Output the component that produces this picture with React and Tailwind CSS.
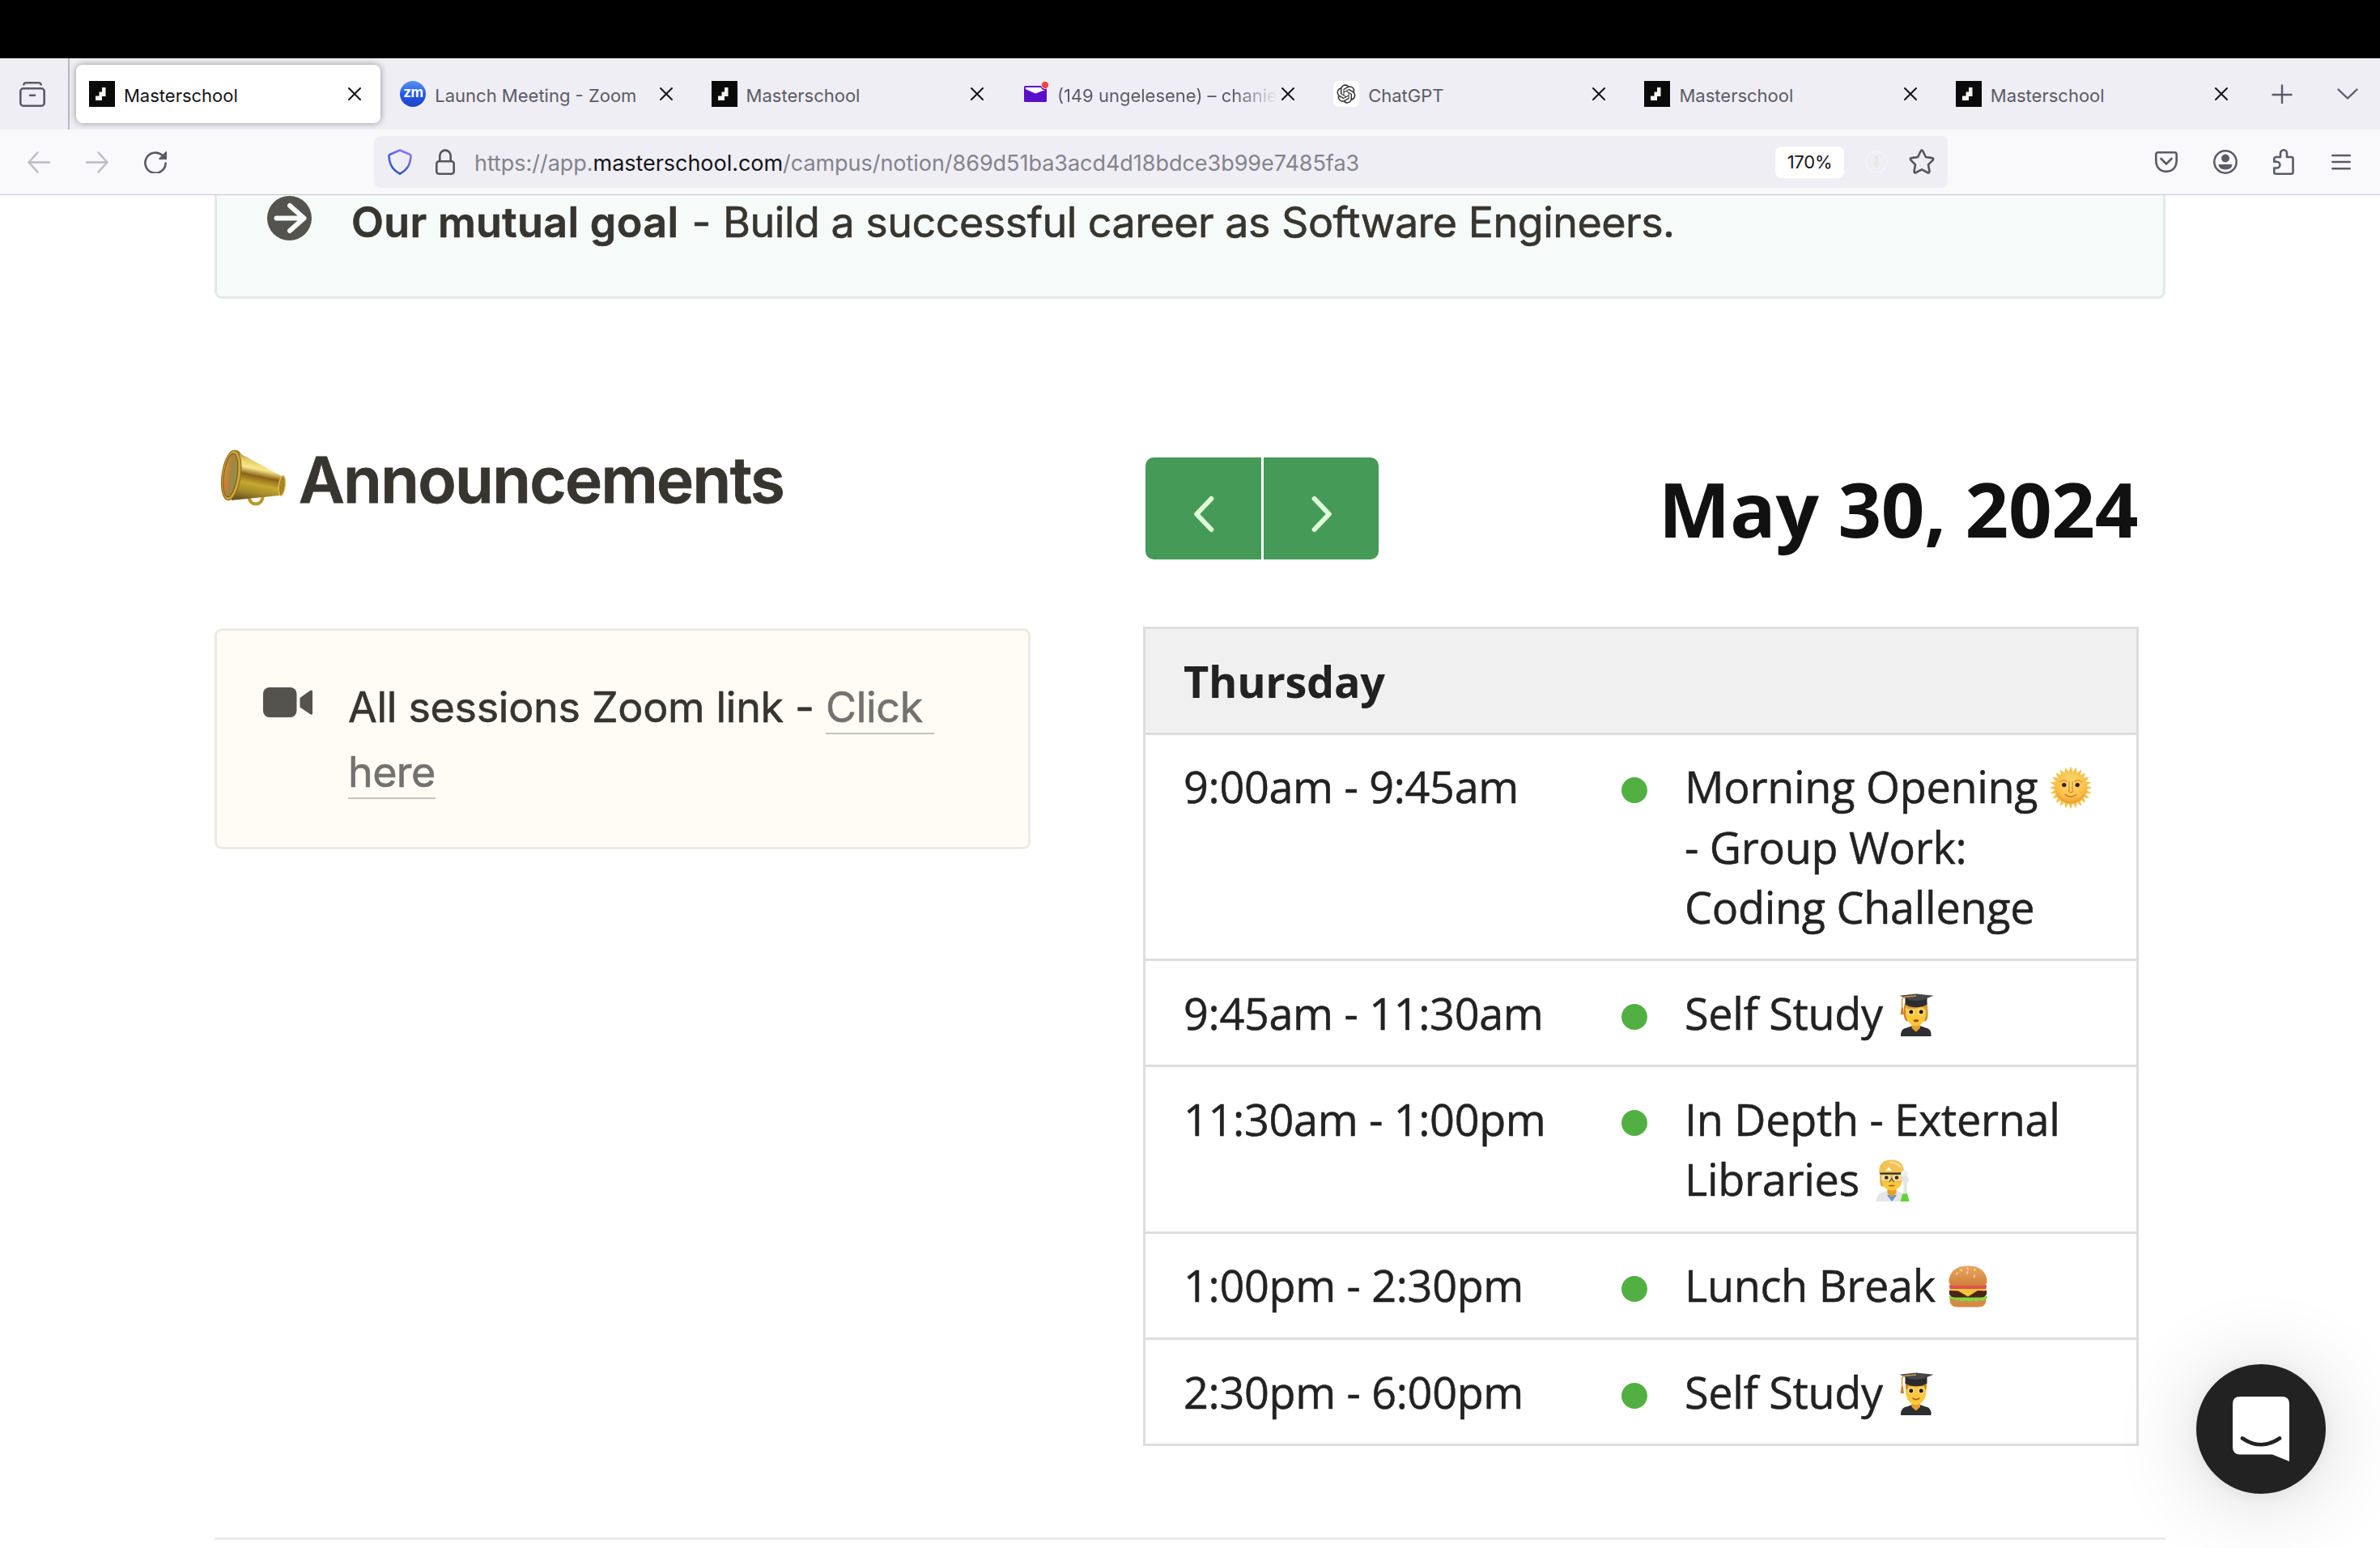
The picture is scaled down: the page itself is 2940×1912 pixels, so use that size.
import React from "react";
import { RiOpenaiFill } from "react-icons/ri";

const STEPS = "M8 24V18.5H12.5V13.5H16V8H20.5V19H16V24Z";

function MasterschoolIcon() {
  return (
    <svg className="size-8 shrink-0" viewBox="0 0 32 32">
      <rect width="32" height="32" fill="#0a0a0a" />
      <path d={STEPS} fill="#f4f3ee" />
    </svg>
  );
}

function ZoomIcon() {
  return (
    <div className="flex size-8 shrink-0 items-center justify-center rounded-full bg-linear-to-t from-[#1e45c0] via-[#2559ee] to-[#5a92ec]">
      <span className="-mt-1 font-['Inter'] text-[17px] leading-none font-bold tracking-[-0.5px] text-white">zm</span>
    </div>
  );
}

function MailIcon() {
  return (
    <svg className="size-8 shrink-0" viewBox="0 0 32 32">
      <rect x="2" y="6" width="28" height="20" rx="1.5" fill="#5a0ecb" />
      <path d="M3.8 8H22.5L25 11H28.2L16 15.6L3.8 10Z" fill="#fff" />
      <circle cx="28" cy="5" r="5" fill="#efeef4" />
      <circle cx="28" cy="5" r="4.2" fill="#ee4444" />
    </svg>
  );
}

function ChatGptIcon() {
  return (
    <div className="flex size-8 shrink-0 items-center justify-center rounded-[7px] bg-white">
      <RiOpenaiFill className="size-[28px] text-[#333]" />
    </div>
  );
}

function CloseIcon() {
  return (
    <svg className="size-4 shrink-0" viewBox="0 0 16 16" fill="none" stroke="#15141a" strokeWidth="2" strokeLinecap="round">
      <path d="M1 1L15 15M15 1L1 15" />
    </svg>
  );
}

const TABS = [
  { title: "Masterschool", Icon: MasterschoolIcon, active: true },
  { title: "Launch Meeting - Zoom", Icon: ZoomIcon },
  { title: "Masterschool", Icon: MasterschoolIcon },
  { title: "(149 ungelesene) – chanie", Icon: MailIcon, fade: true },
  { title: "ChatGPT", Icon: ChatGptIcon },
  { title: "Masterschool", Icon: MasterschoolIcon },
  { title: "Masterschool", Icon: MasterschoolIcon },
];

function Tab({ title, Icon, active, fade }) {
  return (
    <div
      className={
        "flex h-[72px] w-[376.3px] shrink-0 items-center rounded-lg pl-4 pr-6 " +
        (active ? "bg-white text-[#15141a] shadow-[0_0_8px_rgba(0,0,0,0.4)]" : "text-[#5b5b66]")
      }
    >
      <Icon />
      <span
        className={
          "mr-[4px] ml-[11px] min-w-0 flex-1 pt-[3px] text-[22px] leading-8 whitespace-nowrap " +
          (fade ? "mask-r-from-80% mask-r-to-100%" : "")
        }
      >
        {title}
      </span>
      <CloseIcon />
    </div>
  );
}

function TabStrip() {
  return (
    <div className="flex h-[88px] items-center bg-[#efeef4]">
      <div className="flex h-full w-[86px] items-center border-r-2 border-[#b8b8bf] pl-6">
        <svg className="size-8" viewBox="0 0 32 32" fill="none" stroke="#5b5b66" strokeWidth="2.6" strokeLinecap="round">
          <path d="M5.3 4.3Q6 2.2 8.5 2.2H23.5Q26 2.2 26.7 4.3" />
          <rect x="1.3" y="9.3" width="29.4" height="21.4" rx="3.5" />
          <path d="M13 17.7H19" />
        </svg>
      </div>
      <div className="ml-2 flex gap-2">
        {TABS.map((t, i) => (
          <Tab key={i} {...t} />
        ))}
      </div>
      <svg className="ml-[30px] h-6 w-[26px]" viewBox="0 0 26 24" fill="none" stroke="#5b5b66" strokeWidth="2.4" strokeLinecap="round">
        <path d="M1.5 13H24.5M13 1.5V24" />
      </svg>
      <svg className="ml-[55px] h-[14px] w-[26px]" viewBox="0 0 26 14" fill="none" stroke="#5b5b66" strokeWidth="2.4" strokeLinecap="round" strokeLinejoin="round">
        <path d="M1.5 1.5L13 12.5L24.5 1.5" />
      </svg>
    </div>
  );
}

function AddressBar() {
  return (
    <div className="flex h-16 w-[1944px] items-center rounded-lg bg-[#efeef4] pl-[17px] text-[27px]">
      <svg className="h-8 w-[30px]" viewBox="0 0 30 32" fill="none">
        <defs>
          <linearGradient id="shield" x1="0.2" y1="1" x2="0.8" y2="0">
            <stop offset="0" stopColor="#2b50c4" />
            <stop offset="0.5" stopColor="#4d62d8" />
            <stop offset="1" stopColor="#9673f5" />
          </linearGradient>
        </defs>
        <path
          d="M15 1.5L27.2 6.8Q28.6 7.4 28.5 9C27.8 19 24.5 25.5 15 30.6C5.5 25.5 2.2 19 1.5 9Q1.4 7.4 2.8 6.8Z"
          stroke="url(#shield)"
          strokeWidth="2.6"
          strokeLinejoin="round"
        />
      </svg>
      <svg className="ml-[29px] h-8 w-6" viewBox="0 0 24 32" fill="none" stroke="#56555c" strokeWidth="2.6">
        <path d="M5.3 15V8.3a6.7 6.7 0 0 1 13.4 0V15" />
        <rect x="1.3" y="15.3" width="21.4" height="15.4" rx="3" />
      </svg>
      <div className="ml-[24px] pt-[3px] leading-9 tracking-[-0.04px] whitespace-nowrap text-[#84838c]">
        https://app.<span className="text-[#15141a]">masterschool.com</span>/campus/notion/869d51ba3acd4d18bdce3b99e7485fa3
      </div>
      <div className="mr-[16px] ml-auto flex items-center">
        <div className="flex h-[39px] w-[85px] items-center justify-center rounded-lg bg-white pt-px text-[22px] tracking-[-0.2px] text-[#15141a]">170%</div>
        <svg className="ml-[26px] size-7" viewBox="0 0 28 28">
          <circle cx="14" cy="14" r="13" fill="none" stroke="#f6f6f8" strokeWidth="1.2" />
          <path d="M11 5H17V14H20.5L14 23.5L7.5 14H11Z" fill="#e7e8e9" stroke="#f4f4f4" />
        </svg>
        <svg className="ml-[26px] size-8" viewBox="0 0 32 32" fill="none" stroke="#56555c" strokeWidth="2.6" strokeLinejoin="round">
          <path d="M14.6 2.8Q16 0.2 17.4 2.8L20.9 10L28.6 11.1Q31.4 11.6 29.5 13.8L24 19.4L25.4 27.2Q25.7 30.3 23 29L16 25.3L9 29Q6.3 30.3 6.6 27.2L8 19.4L2.5 13.8Q0.6 11.6 3.4 11.1L11.1 10Z" />
        </svg>
      </div>
    </div>
  );
}

function NavBar() {
  return (
    <div className="flex h-[81px] items-center border-b border-[#c6c6cb] bg-[#f9f9fb]">
      <div className="flex w-[462px] items-center gap-11 pl-[34px]">
        <svg className="size-7" viewBox="0 0 28 28" fill="none" stroke="#bcbbc1" strokeWidth="2.4" strokeLinecap="round" strokeLinejoin="round">
          <path d="M27 14.5H1.5M12.5 2.5L1.5 14.5L12.5 26.5" />
        </svg>
        <svg className="size-7" viewBox="0 0 28 28" fill="none" stroke="#bcbbc1" strokeWidth="2.4" strokeLinecap="round" strokeLinejoin="round">
          <path d="M1 14.5H26.5M15.5 2.5L26.5 14.5L15.5 26.5" />
        </svg>
        <svg className="size-7" viewBox="0 0 28 28" fill="none">
          <path d="M22.5 5.9A12.6 12.6 0 1 0 26.6 15.5" stroke="#5b5b66" strokeWidth="2.6" strokeLinecap="round" />
          <path d="M28 1.5V11H18.5Q17.8 10.4 18.5 9.6L26.6 1.2Q27.6 0.6 28 1.5Z" fill="#5b5b66" />
        </svg>
      </div>
      <AddressBar />
      <div className="ml-[256px] flex items-center gap-11">
        <svg className="h-7 w-7" viewBox="0 0 28 28" fill="none" stroke="#5b5b66" strokeWidth="2.6" strokeLinecap="round" strokeLinejoin="round">
          <path d="M3.8 2.3H24.2Q26.7 2.3 26.7 4.8V12.5Q26 25.3 14 25.9Q2 25.3 1.3 12.5V4.8Q1.3 2.3 3.8 2.3Z" />
          <path d="M7.5 10L14 16.5L20.5 10" />
        </svg>
        <svg className="size-[30px]" viewBox="0 0 30 30">
          <circle cx="15" cy="15" r="13.7" fill="none" stroke="#5b5b66" strokeWidth="2.5" />
          <circle cx="15" cy="10.5" r="5" fill="#5b5b66" />
          <path d="M6.5 18H23.5Q23 24.5 15 24.5Q7 24.5 6.5 18Z" fill="#5b5b66" />
        </svg>
        <svg className="h-8 w-[26px]" viewBox="0 0 26 32" fill="none" stroke="#5b5b66" strokeWidth="2.6" strokeLinejoin="round">
          <path d="M9 10V5.3a4 4 0 0 1 8 0V10H22.5a2 2 0 0 1 2 2V28.7a2 2 0 0 1-2 2H3.3a2 2 0 0 1-2-2V23.5H4.5a3.9 3.9 0 0 0 0-7.8H1.3V12a2 2 0 0 1 2-2Z" />
        </svg>
        <svg className="ml-0.5 h-5 w-6" viewBox="0 0 24 20" stroke="#5b5b66" strokeWidth="2.5" strokeLinecap="round">
          <path d="M1.3 2H22.7M1.3 10H22.7M1.3 18.3H22.7" />
        </svg>
      </div>
    </div>
  );
}

function Megaphone() {
  return (
    <svg className="mb-2 h-[72px] w-[84px]" viewBox="0 0 84 72">
      <defs>
        <linearGradient id="cone" x1="0.6" y1="0" x2="0.4" y2="1">
          <stop offset="0.05" stopColor="#7a5a1c" />
          <stop offset="0.25" stopColor="#e9cf66" />
          <stop offset="0.38" stopColor="#f8e88c" />
          <stop offset="0.52" stopColor="#8a6318" />
          <stop offset="0.68" stopColor="#c6a92f" />
          <stop offset="0.85" stopColor="#a3892a" />
          <stop offset="1" stopColor="#6f5a20" />
        </linearGradient>
        <linearGradient id="bell" x1="0" y1="0" x2="1" y2="0">
          <stop offset="0" stopColor="#d98b3c" />
          <stop offset="0.45" stopColor="#a8843e" />
          <stop offset="1" stopColor="#8f9050" />
        </linearGradient>
      </defs>
      <ellipse cx="46" cy="61" rx="8.5" ry="8.5" fill="none" stroke="#b89a2e" strokeWidth="4" />
      <path d="M22 2.5Q26 4 28 8L78 35L75 59L16 65Z" fill="url(#cone)" />
      <ellipse cx="78.3" cy="47" rx="4" ry="12.4" transform="rotate(7 78.3 47)" fill="#a8842a" stroke="#e0c356" strokeWidth="1.3" />
      <ellipse cx="15.7" cy="34" rx="11.5" ry="31" transform="rotate(8 15.7 34)" fill="#cfa636" stroke="#8d6c1e" strokeWidth="1.2" />
      <ellipse cx="14.8" cy="34" rx="8.2" ry="27" transform="rotate(8 14.8 34)" fill="url(#bell)" stroke="#7a5420" strokeWidth="1" />
      <path d="M9 40Q8 52 11 58Q7 52 7.5 42Z" fill="#e86a28" />
    </svg>
  );
}

const RAYS = Array.from({ length: 24 }, (_, i) => i * 15);

function Sun() {
  return (
    <svg className="-mt-2 ml-px inline-block h-[52px] w-[52px] align-[-7px]" viewBox="0 0 52 52">
      <defs>
        <radialGradient id="sun" cx="0.5" cy="0.35" r="0.65">
          <stop offset="0" stopColor="#ffdb73" />
          <stop offset="0.7" stopColor="#fbc04a" />
          <stop offset="1" stopColor="#e79b2c" />
        </radialGradient>
      </defs>
      {RAYS.map((a) => (
        <path key={a} d="M23.2 8L26 0.5L28.8 8Z" fill="#f6c63c" stroke="#eaa92c" strokeWidth="0.4" transform={`rotate(${a} 26 26)`} />
      ))}
      <circle cx="26" cy="26" r="19.5" fill="url(#sun)" />
      <ellipse cx="17.8" cy="22.5" rx="3.4" ry="2.8" fill="#e9a53b" />
      <ellipse cx="34.2" cy="22.5" rx="3.4" ry="2.8" fill="#e9a53b" />
      <circle cx="17.8" cy="22.5" r="2.5" fill="#2d2118" />
      <circle cx="34.2" cy="22.5" r="2.5" fill="#2d2118" />
      <path d="M12.5 19Q17 14.5 21.5 18.5M39.5 19Q35 14.5 30.5 18.5M24 18V28.5Q22.5 31.5 26 31.8Q29.5 31.5 28 28.5V18" fill="none" stroke="#d98a2a" strokeWidth="1.2" />
      <path d="M19.5 34.5Q26 40 32.5 34.5" fill="none" stroke="#c96a2a" strokeWidth="1.5" strokeLinecap="round" />
    </svg>
  );
}

function Graduate({ longHair }) {
  return (
    <svg className="-mt-2 mx-[6px] inline-block h-[53px] w-[43px] align-[-8px]" viewBox="0 0 43 52" preserveAspectRatio="none">
      <path d="M2 52Q1.5 42.5 10 41.5L15.5 39.5H26.5L32 41.5Q40.5 42.5 39.5 52Z" fill="#2e2f33" />
      <path d="M15.5 34H26V42L20.8 46.5L15.5 42Z" fill="#e3a02c" />
      {longHair && <path d="M6.5 13Q4 30 9 33.5H33Q37 30 34.5 13Z" fill="#c98526" />}
      <path d="M8 14H33.5Q34.5 28 31 33Q26 39.5 20.8 39.5Q15.5 39.5 10.5 33Q7 28 8 14Z" fill="#fbc83d" />
      {longHair ? (
        <path d="M7 13Q9 20 15 18.5Q22 19 27 16Q31 18 34.5 22V12H7Z" fill="#dd9a30" />
      ) : (
        <path d="M7.5 12Q8 20 9.5 22L11 17H31L32.5 22Q34.5 18 34 12Z" fill="#c98526" />
      )}
      <circle cx="14.8" cy="22.3" r="3.4" fill="#fff2c9" />
      <circle cx="27.2" cy="22.3" r="3.4" fill="#fff2c9" />
      <circle cx="14.8" cy="22.3" r="2.5" fill="#2a1c14" />
      <circle cx="27.2" cy="22.3" r="2.5" fill="#2a1c14" />
      {longHair ? (
        <ellipse cx="21" cy="33" rx="3.2" ry="1.6" fill="#9a4f21" />
      ) : (
        <path d="M17 31.5Q21 34.5 25 31.5" fill="none" stroke="#a85b1f" strokeWidth="1.5" strokeLinecap="round" />
      )}
      <path d="M7.5 5H34.5V13.5Q28 17 21 17Q14 17 7.5 13.5Z" fill="#2b2c2f" />
      <path d="M0.5 2.8L21 0.5L42.5 2.8L29 8Q21 9.5 13 8Z" fill="#46474b" />
      <path d="M21 3L6 4.5Q3.8 5 3.6 8V18" fill="none" stroke="#d99a3a" strokeWidth="1.5" />
      <path d="M2.8 17H4.8L6 25.5H1.6Z" fill="#c98330" />
    </svg>
  );
}

function Scientist() {
  return (
    <svg className="-mt-2 mx-[6px] inline-block h-[52px] w-[42px] align-[-7px]" viewBox="0 0 42 52">
      <path d="M0.5 52Q1 42 9 40.5L15 38.5H25L32 41Q36 43 36 52Z" fill="#e4e6ea" />
      <path d="M14 44L20 52L26 44Z" fill="#5e93dd" />
      <path d="M14.5 34H25.5V42L20 47L14.5 42Z" fill="#e3a02c" />
      <path d="M5.5 15Q4.5 28 6.5 33L11 34L29 33Q35 26 34 15Z" fill="#e5a63a" />
      <path d="M6 14H33.5Q34 28 30 33.5Q25 38.5 20 38.5Q15 38.5 10 33.5Q6 28 6 14Z" fill="#fbc83d" />
      <path d="M4.5 18Q2.5 1 19 0.5Q36 0.5 35 19L32.5 17Q22 18 16 9.5Q13 16 4.5 18Z" fill="#f2c257" />
      <path d="M17 4Q26 3 31 10" fill="none" stroke="#fbe09a" strokeWidth="2" />
      <rect x="6.5" y="18.5" width="12" height="8.5" rx="3" fill="#f7dc95" stroke="#b3a27a" strokeWidth="0.6" />
      <rect x="20.5" y="18.5" width="12" height="8.5" rx="3" fill="#f7dc95" stroke="#b3a27a" strokeWidth="0.6" />
      <path d="M5.5 17.5H33" stroke="#2d2a26" strokeWidth="2.2" />
      <circle cx="13.3" cy="22.5" r="2.3" fill="#3a2a1c" />
      <circle cx="26" cy="22.5" r="2.3" fill="#3a2a1c" />
      <path d="M17 28L19.8 23.5L22.5 28" fill="none" stroke="#5d4a2a" strokeWidth="1.3" />
      <path d="M17 32.5H22.5" stroke="#a8501f" strokeWidth="1.6" strokeLinecap="round" />
      <path d="M34.5 27H38.5V40L41.5 52H30.5L34.5 40Z" fill="#dce8dd" />
      <path d="M33.3 42.5H39L41.5 52H30.5Z" fill="#61d335" />
      <circle cx="35.5" cy="18" r="4.5" fill="#eceeef" />
      <circle cx="36.5" cy="25" r="4.5" fill="#e3e6e8" />
    </svg>
  );
}

function Burger() {
  return (
    <svg className="-mt-2 ml-px inline-block h-[52px] w-[50px] align-[-7px]" viewBox="0 0 50 52">
      <defs>
        <linearGradient id="bun" x1="0" y1="0" x2="0" y2="1">
          <stop offset="0" stopColor="#e9a862" />
          <stop offset="1" stopColor="#cf7f38" />
        </linearGradient>
      </defs>
      <path d="M2.5 40H47.5Q48 51.5 38 51.5H12Q2 51.5 2.5 40Z" fill="#d58b48" />
      <path d="M1.5 38Q25 35 48.5 38Q50 41 46 41.5Q43 45 38.5 42.5Q35 45.5 31 43Q27 46 23 43Q18 46 15 42.5Q10 44.5 8 41.5Q1 42 1.5 38Z" fill="#83d943" />
      <path d="M2 31Q25 27 48 31Q49.5 39.5 41 39.5H9Q0.5 39.5 2 31Z" fill="#4b2417" />
      <path d="M2 28H48.5L46 31.5L37 31L25 38.5L13 31.5L3 31Z" fill="#f8c43e" />
      <path d="M2.5 24H47.5Q49 28.5 46 29H4Q1 28.5 2.5 24Z" fill="#e2514b" />
      <path d="M1.5 18Q4 0.5 25 0.5Q46 0.5 48.5 18Q49 25 43 25H7Q1 25 1.5 18Z" fill="url(#bun)" />
      <path d="M16 5L17.5 7M24 3L25 5M12 9L11 11M24.5 8L24 10M33 12L32.5 14.5M34 4.5L33 6" stroke="#f6dcae" strokeWidth="1.5" strokeLinecap="round" />
    </svg>
  );
}

const EVENTS = [
  { time: "9:00am - 9:45am", box: "h-[279px] pt-[26.4px]", lines: ["Morning Opening", "- Group Work:", "Coding Challenge"], emojiLine: 0, emoji: <Sun /> },
  { time: "9:45am - 11:30am", box: "h-[131px] pt-[27px]", lines: ["Self Study"], emojiLine: 0, emoji: <Graduate longHair /> },
  { time: "11:30am - 1:00pm", box: "h-[206px] pt-[27px]", lines: ["In Depth - External", "Libraries"], emojiLine: 1, emoji: <Scientist /> },
  { time: "1:00pm - 2:30pm", box: "h-[131px] pt-[26.4px]", lines: ["Lunch Break"], emojiLine: 0, emoji: <Burger /> },
  { time: "2:30pm - 6:00pm", box: "h-[131px] pt-[27px]", lines: ["Self Study"], emojiLine: 0, emoji: <Graduate /> },
];

function Schedule() {
  return (
    <section className="w-[1230px] pt-[196px] font-['Open_Sans',sans-serif]">
      <div className="flex h-[126px] items-center justify-between pl-[3px]">
        <div className="flex h-full gap-[3px]">
          <button className="flex w-[143px] items-center justify-center rounded-l-[10px] bg-[#459a57] pt-[13px]">
            <svg className="h-[46px] w-[26px]" viewBox="0 0 26 46" fill="none" stroke="#dfffd8" strokeWidth="6" strokeLinecap="round" strokeLinejoin="round">
              <path d="M22.3 4L4.2 23L22.3 42" />
            </svg>
          </button>
          <button className="flex w-[142px] items-center justify-center rounded-r-[10px] bg-[#459a57] pt-[13px] pl-[2px]">
            <svg className="h-[46px] w-[26px]" viewBox="0 0 26 46" fill="none" stroke="#dfffd8" strokeWidth="6" strokeLinecap="round" strokeLinejoin="round">
              <path d="M3.7 4L21.8 23L3.7 42" />
            </svg>
          </button>
        </div>
        <h2 className="text-[94px] leading-[126px] font-bold tracking-[-0.4px] text-[#111]">
          <span className="mr-px">May 30, 2024</span>
        </h2>
      </div>
      <div className="mt-[83px] border-[3px] border-[#ddd] text-[54px] leading-[74.2px] text-[#222]">
        <div className="h-[128px] bg-[#f0f0f0] pt-[27px] pl-[47px] font-bold tracking-[-0.3px]">Thursday</div>
        {EVENTS.map((e, i) => (
          <div key={i} className={"flex border-t-[3px] border-[#ddd] pl-[47px] [-webkit-text-stroke:0.5px_#222] " + e.box}>
            <div className="w-[541px] tracking-[-0.34px]">{e.time}</div>
            <div className="mt-[26px] size-8 rounded-full bg-[#52b043]" />
            <div className="ml-[46px] tracking-[-0.3px] whitespace-nowrap">
              {e.lines.map((l, j) => (
                <div key={j} className="h-[74.2px]">
                  {l} {j === e.emojiLine && e.emoji}
                </div>
              ))}
            </div>
          </div>
        ))}
      </div>
    </section>
  );
}

function Announcements() {
  return (
    <section className="w-[1007px] pt-[174px]">
      <div className="flex h-[100px] items-center pl-[5px]">
        <Megaphone />
        <h2 className="ml-[15px] text-[78px] leading-[100px] font-semibold tracking-[-1.65px] text-[#37352f] [-webkit-text-stroke:0.8px_#37352f]">Announcements</h2>
      </div>
      <div className="mt-[133px] flex h-[273px] w-[1008px] rounded-[9px] border-[3px] border-[#edeae4] bg-[#fffcf5] pt-[55px] pl-[57px]">
        <svg className="mt-[15px] h-[38px] w-[62px]" viewBox="0 0 62 38" fill="#55534e">
          <rect y="0" width="41.5" height="37" rx="8" />
          <path d="M45.5 13L58 4Q61 2.5 61 5V32Q61 35 58 33L45.5 24.5Z" />
        </svg>
        <p className="ml-[43px] text-[52px] leading-[80px] tracking-[-0.31px] whitespace-pre text-[#37352f] [-webkit-text-stroke:0.6px]">
          All sessions Zoom link -{" "}
          <a className="border-b-2 border-[#c4c3bc] text-[#73726e]">{"Click "}</a>
          <br />
          <a className="border-b-2 border-[#c4c3bc] tracking-[-0.6px] text-[#73726e]">here</a>
        </p>
      </div>
    </section>
  );
}

export default function App() {
  return (
    <div className="relative flex h-[1912px] w-[2940px] flex-col overflow-hidden bg-white font-['Inter',sans-serif]">
      <div className="h-[72px] bg-black" />
      <TabStrip />
      <NavBar />
      <main className="flex flex-1 flex-col pr-[265px] pl-[265px]">
        <div className="flex h-[128px] w-[2410px] rounded-b-[9px] border-x-[3px] border-b-[3px] border-[#e4e9e8] bg-[#f6faf9] pl-[62px]">
          <svg className="mt-px size-[55px]" viewBox="0 0 55 55">
            <circle cx="27.5" cy="27.5" r="27.5" fill="#55534e" />
            <path d="M11.5 27.5H45M28 12L45.5 27.5L28 43" fill="none" stroke="#f6faf9" strokeWidth="6" strokeLinecap="round" strokeLinejoin="round" />
          </svg>
          <p className="ml-[49px] text-[52px] leading-[67px] tracking-[-0.5px] whitespace-pre text-[#37352f] [-webkit-text-stroke:0.6px]">
            <strong className="font-semibold tracking-[0.35px]">Our mutual goal</strong>
            <span className="ml-0.5"> - </span>
            <span className="ml-px">Build a successful career as Software Engineers.</span>
          </p>
        </div>
        <div className="flex h-[1530px] w-[2410px] gap-[140px]">
          <Announcements />
          <Schedule />
        </div>
        <div className="h-[3px] w-[2410px] shrink-0 bg-[#ebebea]" />
      </main>
      <button className="absolute top-[1685px] left-[2713px] flex size-40 items-center justify-center rounded-full bg-[#222] shadow-[0_3px_20px_rgba(0,0,0,0.06),0_7px_109px_rgba(0,0,0,0.16)]">
        <svg className="h-20 w-[70px]" viewBox="0 0 70 80">
          <path d="M9 0H61Q70 0 70 9V80L49 71.5H9Q0 71.5 0 62.5V9Q0 0 9 0Z" fill="#fff" />
          <path d="M12 51.5Q35 67 58 51.5" fill="none" stroke="#222" strokeWidth="4.6" strokeLinecap="round" />
        </svg>
      </button>
    </div>
  );
}
